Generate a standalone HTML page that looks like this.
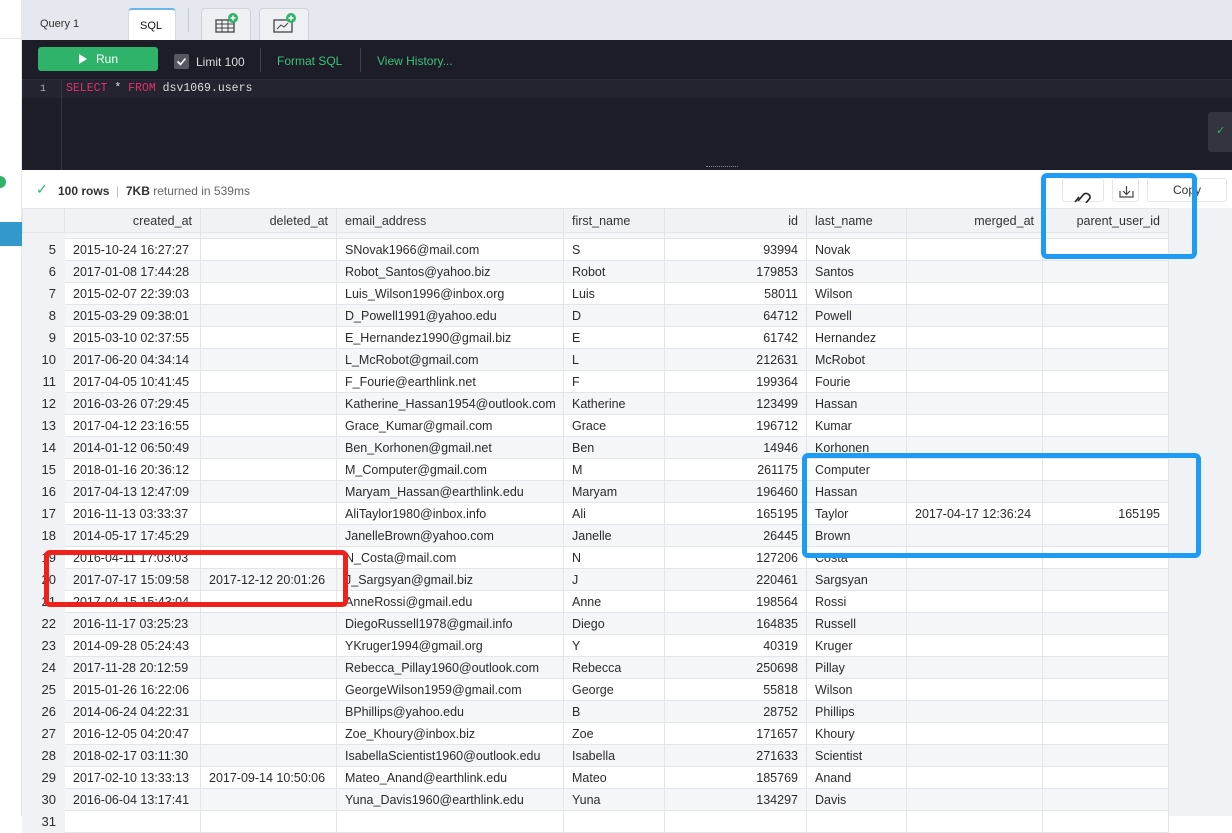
<!DOCTYPE html>
<html><head><meta charset="utf-8"><style>
*{box-sizing:border-box;margin:0;padding:0}
body{width:1232px;height:816px;overflow:hidden;background:#fff;font-family:"Liberation Sans",sans-serif;position:relative}
.abs{position:absolute}
#tabs{left:22px;top:0;width:1210px;height:40px;background:#e5e8ef}
.tab{position:absolute;top:8px;height:32px;border:1px solid #cfd3dc;border-bottom:none;border-radius:4px 4px 0 0;background:#eef0f4}
#ed{left:22px;top:40px;width:1210px;height:130px;background:#1c1d27}
#st{left:22px;top:170px;width:1210px;height:38px;background:#fff;font-size:12px;color:#333}
table{position:absolute;left:22px;top:208px;border-collapse:collapse;font-size:12.5px;color:#2b2b2b;table-layout:fixed}
td,th{height:22px;padding:0 8px;border:1px solid #e3e5ea;white-space:nowrap;overflow:hidden}
th{font-weight:normal;background:#f1f2f5;height:24px;text-align:right;color:#333}
th.l{text-align:left}
td.r{text-align:right}
tr.g td{background:#f5f6f8}
tr.thin td{height:6px;line-height:0;font-size:0;padding:0}
td.n{text-align:right;background:#f1f2f5!important;border-color:#f1f2f5;padding-right:8px;font-size:13px}
.grey{left:1168px;top:208px;width:64px;height:608px;background:#f1f2f5}
.box{position:absolute;border-radius:6px}
</style></head><body>
<div class="abs" style="left:0;top:0;width:22px;height:816px;background:#fff;border-right:1px solid #e6e8ec"></div>
<div class="abs" style="left:0;top:38px;width:22px;height:1px;background:#e6e8ec"></div>
<div class="abs" style="left:-6px;top:176px;width:12px;height:12px;border-radius:50%;background:#2fb36a"></div>
<div class="abs" style="left:0;top:222px;width:22px;height:24px;background:#3399cc"></div>
<div id="tabs" class="abs">
 <div class="abs" style="left:18px;top:18px;font-size:11px;color:#333">Query 1</div>
 <div class="tab" style="left:106px;width:48px;background:#fff;border-top:2px solid #6ab7e8;border-color:#d6dae2;border-top-color:#6ab7e8"><span style="position:absolute;left:11px;top:10px;font-size:11px;color:#111">SQL</span></div>
 <div class="abs" style="left:166px;top:8px;width:1px;height:24px;background:#c5c9d2"></div>
 <div class="tab" style="left:179px;width:50px"><svg width="50" height="30"><rect x="14" y="11" width="18" height="12" fill="none" stroke="#444" stroke-width="1.3"/><path d="M14 15h18M14 19h18M20 11v12M26 11v12" stroke="#444" stroke-width="1"/><circle cx="31" cy="9" r="5" fill="#2fb36a"/><path d="M31 6.5v5M28.5 9h5" stroke="#fff" stroke-width="1.4"/></svg></div>
 <div class="tab" style="left:237px;width:50px"><svg width="50" height="30"><rect x="14" y="11" width="18" height="12" fill="none" stroke="#444" stroke-width="1.3"/><path d="M17 20l4-4 3 2 4-4" fill="none" stroke="#444" stroke-width="1"/><circle cx="31" cy="9" r="5" fill="#2fb36a"/><path d="M31 6.5v5M28.5 9h5" stroke="#fff" stroke-width="1.4"/></svg></div>
</div>
<div id="ed" class="abs">
 <div class="abs" style="left:16px;top:7px;width:120px;height:24px;background:#2fb36a;border-radius:3px;color:#fff;font-size:12px"><svg class="abs" style="left:40px;top:6px" width="10" height="12"><path d="M1 1l8 5-8 5z" fill="#fff"/></svg><span class="abs" style="left:58px;top:5px">Run</span></div>
 <div class="abs" style="left:152px;top:14px;width:15px;height:15px;background:#555860;border-radius:2px"><svg width="15" height="15"><path d="M3.5 7.5l3 3 5-6" fill="none" stroke="#fff" stroke-width="1.6"/></svg></div>
 <div class="abs" style="left:174px;top:15px;font-size:12px;color:#ddd">Limit 100</div>
 <div class="abs" style="left:238px;top:8px;width:1px;height:24px;background:#3c3e48"></div>
 <div class="abs" style="left:255px;top:14px;font-size:12px;color:#3cc27a">Format SQL</div>
 <div class="abs" style="left:338px;top:8px;width:1px;height:24px;background:#3c3e48"></div>
 <div class="abs" style="left:355px;top:14px;font-size:12px;color:#3cc27a">View History...</div>
 <div class="abs" style="left:0;top:39px;width:1210px;height:1px;background:#2a2c36"></div>
 <div class="abs" style="left:0;top:40px;width:1210px;height:18px;background:#23242f"></div>
 <div class="abs" style="left:39px;top:40px;width:1px;height:90px;background:#33353f"></div>
 <div class="abs" style="left:18px;top:44px;font:10px 'Liberation Mono',monospace;color:#aaa">1</div>
 <div class="abs" style="left:44px;top:42px;font:11.5px 'Liberation Mono',monospace;color:#ddd;white-space:pre"><span style="color:#e0306a">SELECT</span> * <span style="color:#e0306a">FROM</span> dsv1069.users</div>
 <div class="abs" style="left:1186px;top:72px;width:30px;height:40px;background:#33353e;border-radius:3px"><span style="position:absolute;left:8px;top:12px;color:#2fb36a;font-size:11px">✓</span></div>
 <div class="abs" style="left:684px;top:126px;width:32px;height:5px;border-top:1px dotted #888;border-bottom:1px dotted #888"></div>
</div>
<div id="st" class="abs">
 <span class="abs" style="left:14px;top:11px;color:#2fb36a;font-size:14px">✓</span>
 <span class="abs" style="left:36px;top:14px"><b style="font-weight:600">100 rows</b> <span style="color:#bbb">&nbsp;|&nbsp;</span> <b style="font-weight:600">7KB</b> <span style="color:#666">returned in 539ms</span></span>
 <div class="abs" style="left:1040px;top:8px;width:42px;height:24px;border:1px solid #e3e5ea;border-radius:3px"><svg width="42" height="24"><path d="M12 23l4-5M15 22l6-7a4 4 0 016 4l-4 5" fill="none" stroke="#222" stroke-width="1.6"/></svg></div>
 <div class="abs" style="left:1090px;top:8px;width:27px;height:24px;border:1px solid #e3e5ea;border-radius:3px"><svg width="27" height="24"><path d="M7 12v6h13v-6M13.5 7v8M10 12l3.5 3.5L17 12" fill="none" stroke="#444" stroke-width="1.2"/></svg></div>
 <div class="abs" style="left:1125px;top:8px;width:80px;height:24px;border:1px solid #e3e5ea;border-radius:3px;font-size:12px;text-align:center;line-height:22px">Copy</div>
</div>
<div class="abs grey"></div>
<table style="width:1146px">
<colgroup><col style="width:42px"><col style="width:136px"><col style="width:136px"><col style="width:227px"><col style="width:101px"><col style="width:142px"><col style="width:100px"><col style="width:136px"><col style="width:126px"></colgroup>
<tr><th style="background:#f1f2f5"></th><th>created_at</th><th>deleted_at</th><th class="l">email_address</th><th class="l">first_name</th><th>id</th><th class="l">last_name</th><th>merged_at</th><th>parent_user_id</th></tr>
<tr class="g thin"><td class="n"></td><td></td><td></td><td></td><td></td><td></td><td></td><td></td><td></td></tr>
<tr><td class="n">5</td><td>2015-10-24 16:27:27</td><td></td><td>SNovak1966@mail.com</td><td>S</td><td class="r">93994</td><td>Novak</td><td></td><td></td></tr>
<tr class="g"><td class="n">6</td><td>2017-01-08 17:44:28</td><td></td><td>Robot_Santos@yahoo.biz</td><td>Robot</td><td class="r">179853</td><td>Santos</td><td></td><td></td></tr>
<tr><td class="n">7</td><td>2015-02-07 22:39:03</td><td></td><td>Luis_Wilson1996@inbox.org</td><td>Luis</td><td class="r">58011</td><td>Wilson</td><td></td><td></td></tr>
<tr class="g"><td class="n">8</td><td>2015-03-29 09:38:01</td><td></td><td>D_Powell1991@yahoo.edu</td><td>D</td><td class="r">64712</td><td>Powell</td><td></td><td></td></tr>
<tr><td class="n">9</td><td>2015-03-10 02:37:55</td><td></td><td>E_Hernandez1990@gmail.biz</td><td>E</td><td class="r">61742</td><td>Hernandez</td><td></td><td></td></tr>
<tr class="g"><td class="n">10</td><td>2017-06-20 04:34:14</td><td></td><td>L_McRobot@gmail.com</td><td>L</td><td class="r">212631</td><td>McRobot</td><td></td><td></td></tr>
<tr><td class="n">11</td><td>2017-04-05 10:41:45</td><td></td><td>F_Fourie@earthlink.net</td><td>F</td><td class="r">199364</td><td>Fourie</td><td></td><td></td></tr>
<tr class="g"><td class="n">12</td><td>2016-03-26 07:29:45</td><td></td><td>Katherine_Hassan1954@outlook.com</td><td>Katherine</td><td class="r">123499</td><td>Hassan</td><td></td><td></td></tr>
<tr><td class="n">13</td><td>2017-04-12 23:16:55</td><td></td><td>Grace_Kumar@gmail.com</td><td>Grace</td><td class="r">196712</td><td>Kumar</td><td></td><td></td></tr>
<tr class="g"><td class="n">14</td><td>2014-01-12 06:50:49</td><td></td><td>Ben_Korhonen@gmail.net</td><td>Ben</td><td class="r">14946</td><td>Korhonen</td><td></td><td></td></tr>
<tr><td class="n">15</td><td>2018-01-16 20:36:12</td><td></td><td>M_Computer@gmail.com</td><td>M</td><td class="r">261175</td><td>Computer</td><td></td><td></td></tr>
<tr class="g"><td class="n">16</td><td>2017-04-13 12:47:09</td><td></td><td>Maryam_Hassan@earthlink.edu</td><td>Maryam</td><td class="r">196460</td><td>Hassan</td><td></td><td></td></tr>
<tr><td class="n">17</td><td>2016-11-13 03:33:37</td><td></td><td>AliTaylor1980@inbox.info</td><td>Ali</td><td class="r">165195</td><td>Taylor</td><td>2017-04-17 12:36:24</td><td class="r">165195</td></tr>
<tr class="g"><td class="n">18</td><td>2014-05-17 17:45:29</td><td></td><td>JanelleBrown@yahoo.com</td><td>Janelle</td><td class="r">26445</td><td>Brown</td><td></td><td></td></tr>
<tr><td class="n">19</td><td>2016-04-11 17:03:03</td><td></td><td>N_Costa@mail.com</td><td>N</td><td class="r">127206</td><td>Costa</td><td></td><td></td></tr>
<tr class="g"><td class="n">20</td><td>2017-07-17 15:09:58</td><td>2017-12-12 20:01:26</td><td>J_Sargsyan@gmail.biz</td><td>J</td><td class="r">220461</td><td>Sargsyan</td><td></td><td></td></tr>
<tr><td class="n">21</td><td>2017-04-15 15:43:04</td><td></td><td>AnneRossi@gmail.edu</td><td>Anne</td><td class="r">198564</td><td>Rossi</td><td></td><td></td></tr>
<tr class="g"><td class="n">22</td><td>2016-11-17 03:25:23</td><td></td><td>DiegoRussell1978@gmail.info</td><td>Diego</td><td class="r">164835</td><td>Russell</td><td></td><td></td></tr>
<tr><td class="n">23</td><td>2014-09-28 05:24:43</td><td></td><td>YKruger1994@gmail.org</td><td>Y</td><td class="r">40319</td><td>Kruger</td><td></td><td></td></tr>
<tr class="g"><td class="n">24</td><td>2017-11-28 20:12:59</td><td></td><td>Rebecca_Pillay1960@outlook.com</td><td>Rebecca</td><td class="r">250698</td><td>Pillay</td><td></td><td></td></tr>
<tr><td class="n">25</td><td>2015-01-26 16:22:06</td><td></td><td>GeorgeWilson1959@gmail.com</td><td>George</td><td class="r">55818</td><td>Wilson</td><td></td><td></td></tr>
<tr class="g"><td class="n">26</td><td>2014-06-24 04:22:31</td><td></td><td>BPhillips@yahoo.edu</td><td>B</td><td class="r">28752</td><td>Phillips</td><td></td><td></td></tr>
<tr><td class="n">27</td><td>2016-12-05 04:20:47</td><td></td><td>Zoe_Khoury@inbox.biz</td><td>Zoe</td><td class="r">171657</td><td>Khoury</td><td></td><td></td></tr>
<tr class="g"><td class="n">28</td><td>2018-02-17 03:11:30</td><td></td><td>IsabellaScientist1960@outlook.edu</td><td>Isabella</td><td class="r">271633</td><td>Scientist</td><td></td><td></td></tr>
<tr><td class="n">29</td><td>2017-02-10 13:33:13</td><td>2017-09-14 10:50:06</td><td>Mateo_Anand@earthlink.edu</td><td>Mateo</td><td class="r">185769</td><td>Anand</td><td></td><td></td></tr>
<tr class="g"><td class="n">30</td><td>2016-06-04 13:17:41</td><td></td><td>Yuna_Davis1960@earthlink.edu</td><td>Yuna</td><td class="r">134297</td><td>Davis</td><td></td><td></td></tr>
<tr><td class="n">31</td><td></td><td></td><td></td><td></td><td></td><td></td><td></td><td></td></tr>
</table>
<div class="box" style="left:44px;top:550px;width:304px;height:57px;border:5px solid #f0201a"></div>
<div class="box" style="left:1041px;top:173px;width:156px;height:86px;border:5px solid #1e9bf5"></div>
<div class="box" style="left:802px;top:453px;width:399px;height:105px;border:5px solid #1e9bf5"></div>
</body></html>
